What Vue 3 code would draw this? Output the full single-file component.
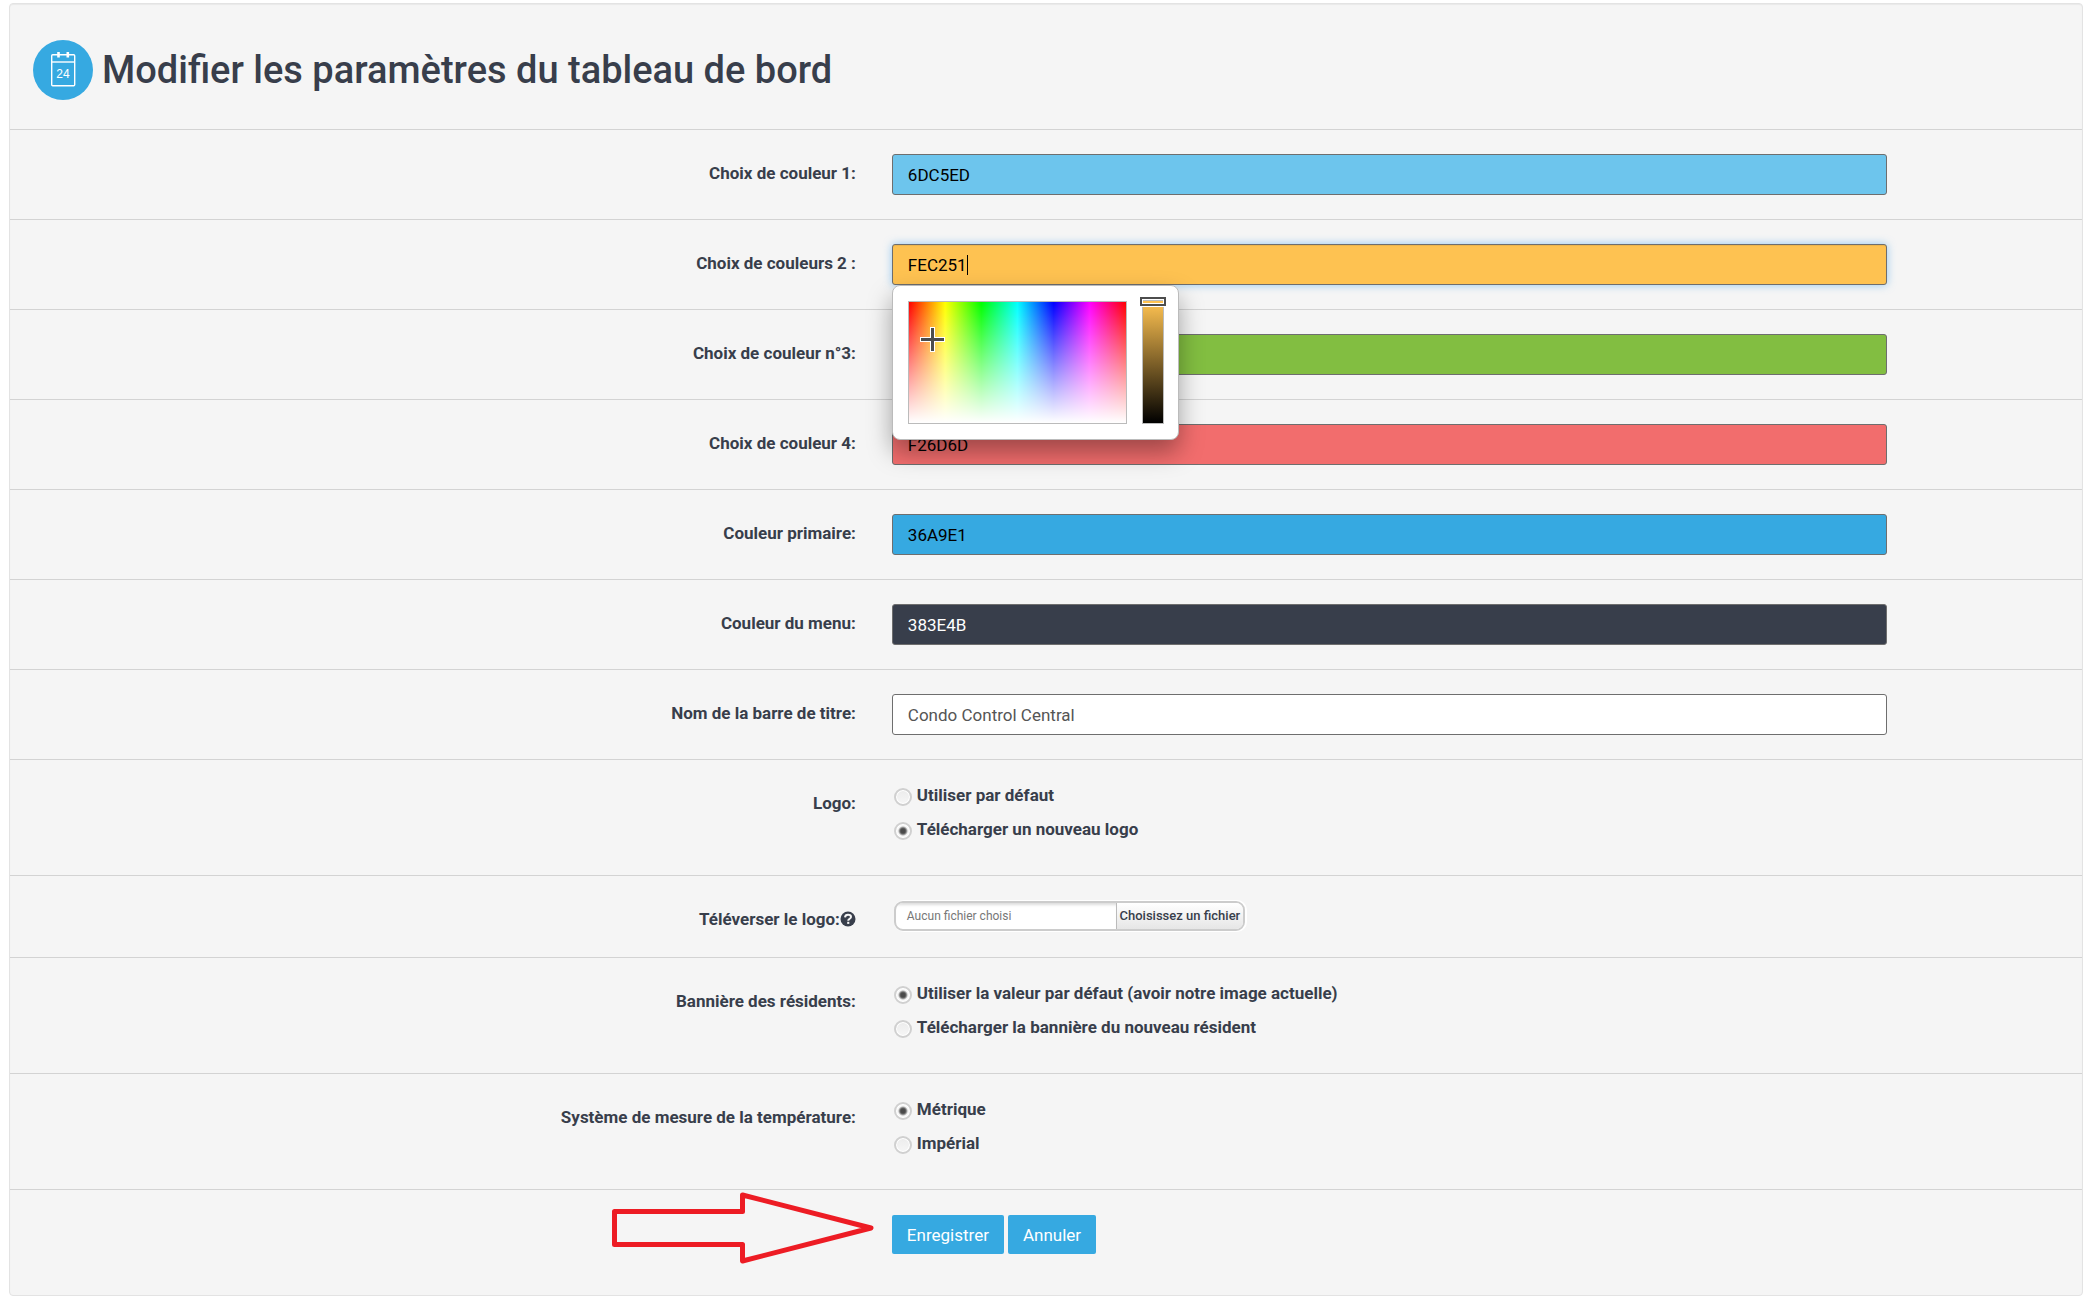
<template>
    <form class="panel" @submit.prevent>
        <header class="panel-header">
            <svg class="panel-icon" viewBox="0 0 60 60" aria-hidden="true">
                <circle cx="30" cy="30" r="30" fill="#36a9e1" />
                <g fill="none" stroke="#fff" stroke-width="1.4">
                    <rect x="18.7" y="14.7" width="23" height="31" rx="1" />
                    <path d="M18.7 22h23" />
                    <path d="M25.5 12v5.5M34.8 12v5.5" stroke-width="2.6" />
                </g>
                <text x="30" y="38" text-anchor="middle" class="panel-icon-day">24</text>
            </svg>
            <h1 class="panel-title">Modifier les paramètres du tableau de bord</h1>
        </header>

        <div v-for="field in fields" :key="field.id" class="row">
            <label :for="field.id" class="row-label">{{ field.label }}</label>
            <div class="field-wrapper">
                <input :id="field.id" v-model="field.value" type="text" autocomplete="off" spellcheck="false"
                    class="field" :class="field.id" />
                <template v-if="field.picker">
                    <span class="caret"></span>
                    <div class="picker">
                        <div class="picker-palette">
                            <svg class="picker-cross" viewBox="0 0 25 25" aria-hidden="true">
                                <path d="M12.5 0v25M0 12.5h25" stroke="#fff" stroke-width="5" />
                                <path d="M12.5 1v23M1 12.5h23" stroke="#4d4d4d" stroke-width="3" />
                            </svg>
                        </div>
                        <div class="picker-slider">
                            <span class="picker-thumb"></span>
                        </div>
                    </div>
                </template>
            </div>
        </div>

        <div class="row row-options" role="radiogroup" aria-labelledby="logo-label">
            <span id="logo-label" class="row-label">Logo:</span>
            <div class="options">
                <label v-for="option in logoOptions" :key="option" class="option">
                    <input v-model="logo" type="radio" name="logo" :value="option" class="radio" />{{ option }}
                </label>
            </div>
        </div>

        <div class="row row-file">
            <label for="logo-file" class="row-label">
                Téléverser le logo:<svg class="help-icon" viewBox="0 0 16 16" aria-hidden="true">
                    <circle cx="8" cy="8" r="7.5" fill="#383e4b" />
                    <path d="M5 6.300C5.200 4.600 6.400 3.800 8 3.800C9.800 3.800 11 4.700 11 6C11 7.800 8.200 7.700 8.200 9.800"
                        fill="none" stroke="#f5f5f5" stroke-width="2" />
                    <path d="M7.200 10.800h2.100v2.100h-2.100z" fill="#f5f5f5" />
                </svg>
            </label>
            <div class="uploader">
                <span class="uploader-name">Aucun fichier choisi</span>
                <span class="uploader-action">Choisissez un fichier</span>
                <input id="logo-file" type="file" class="uploader-input" />
            </div>
        </div>

        <div class="row row-options" role="radiogroup" aria-labelledby="banner-label">
            <span id="banner-label" class="row-label">Bannière des résidents:</span>
            <div class="options">
                <label v-for="option in bannerOptions" :key="option" class="option">
                    <input v-model="banner" type="radio" name="banner" :value="option" class="radio" />{{ option }}
                </label>
            </div>
        </div>

        <div class="row row-options" role="radiogroup" aria-labelledby="unit-label">
            <span id="unit-label" class="row-label">Système de mesure de la température:</span>
            <div class="options">
                <label v-for="option in unitOptions" :key="option" class="option">
                    <input v-model="unit" type="radio" name="unit" :value="option" class="radio" />{{ option }}
                </label>
            </div>
        </div>

        <div class="row row-actions">
            <div class="actions">
                <svg class="arrow" viewBox="0 0 264 74" aria-hidden="true">
                    <path d="M3.500 20.500H131.500V4L260 37 131.500 70V53.500H3.500z" fill="none" stroke="#ed1c24"
                        stroke-width="5" stroke-linejoin="round" />
                </svg>
                <button type="submit" class="btn">Enregistrer</button>
                <button type="button" class="btn">Annuler</button>
            </div>
        </div>
    </form>
</template>

<script setup>
import { onMounted, ref } from 'vue';

const fields = ref([
    { id: 'color-1', label: 'Choix de couleur 1:', value: '6DC5ED' },
    { id: 'color-2', label: 'Choix de couleurs 2 :', value: 'FEC251', picker: true },
    { id: 'color-3', label: 'Choix de couleur n°3:', value: '82BE41' },
    { id: 'color-4', label: 'Choix de couleur 4:', value: 'F26D6D' },
    { id: 'color-primary', label: 'Couleur primaire:', value: '36A9E1' },
    { id: 'color-menu', label: 'Couleur du menu:', value: '383E4B' },
    { id: 'title-bar', label: 'Nom de la barre de titre:', value: 'Condo Control Central' }
]);

const logoOptions = ['Utiliser par défaut', 'Télécharger un nouveau logo'];
const bannerOptions = [
    'Utiliser la valeur par défaut (avoir notre image actuelle)',
    'Télécharger la bannière du nouveau résident'
];
const unitOptions = ['Métrique', 'Impérial'];

const logo = ref(logoOptions[1]);
const banner = ref(bannerOptions[0]);
const unit = ref(unitOptions[0]);

onMounted(() => {
    const input = document.getElementById('color-2');
    input.focus();
    input.setSelectionRange(6, 6);
});
</script>

<style>
body {
    margin: 0;
    background: #fff;
}
</style>

<style scoped>
.panel {
    margin: 3px 2px 2px 9px;
    border: 1px solid #e3e3e3;
    border-radius: 4px;
    background: #f5f5f5;
    box-shadow: inset 0 1px 1px rgba(0, 0, 0, 0.05);
    font-family: Roboto, "Liberation Sans", sans-serif;
    font-size: 17px;
    line-height: 24px;
    color: #383e4b;
}

.panel-header {
    display: flex;
    align-items: center;
    gap: 9px;
    padding: 36px 23px 29px;
}

.panel-icon {
    width: 60px;
    height: 60px;
}

.panel-icon-day {
    fill: #fff;
    font-family: "Liberation Sans", sans-serif;
    font-size: 12px;
}

.panel-title {
    margin: 0;
    font-size: 38px;
    font-weight: 500;
    line-height: 60px;
}

.row {
    display: grid;
    grid-template-columns: 17fr 20fr;
    column-gap: 36px;
    align-items: start;
    padding: 24px 195px 24px 0;
    border-top: 1px solid #d3d3d3;
}

.row-label {
    padding-top: 7px;
    font-weight: 700;
    text-align: right;
}

.field-wrapper {
    position: relative;
}

.field {
    display: block;
    box-sizing: border-box;
    width: 100%;
    height: 41px;
    padding: 0 15px;
    border: 1px solid #6e6e6e;
    border-radius: 3px;
    outline: 0;
    background: #fff;
    color: #000;
    font-family: inherit;
    font-size: 17px;
}

.field:focus {
    box-shadow: inset 0 1px 1px rgba(0, 0, 0, 0.075), 0 0 8px rgba(82, 168, 236, 0.6);
    caret-color: transparent;
}

.caret {
    position: absolute;
    top: 11px;
    left: 75px;
    width: 1px;
    height: 20px;
    background: #000;
}

.color-1 {
    background: #6dc5ed;
}

.color-2 {
    background: #fec251;
}

.color-3 {
    background: #82be41;
}

.color-4 {
    background: #f26d6d;
}

.color-primary {
    background: #36a9e1;
}

.color-menu {
    background: #383e4b;
    color: #fff;
}

.title-bar {
    color: #555;
}

.picker {
    position: absolute;
    top: 100%;
    left: 0;
    z-index: 2;
    display: flex;
    gap: 15px;
    padding: 15px 14px 15px 15px;
    border: 1px solid #bbb;
    border-radius: 8px;
    background: #fff;
    box-shadow: 0 12px 24px rgba(0, 0, 0, 0.35);
}

.picker-palette {
    position: relative;
    width: 217px;
    height: 121px;
    border: 1px solid #bbb;
    background:
        linear-gradient(to bottom, rgba(255, 255, 255, 0), #fff),
        linear-gradient(to right, #f00, #ff0, #0f0, #0ff, #00f, #f0f, #f00);
}

.picker-cross {
    position: absolute;
    top: 25px;
    left: 11px;
    width: 25px;
    height: 25px;
}

.picker-slider {
    position: relative;
    width: 20px;
    height: 121px;
    border: 1px solid #bbb;
    background: linear-gradient(to bottom, #fec251, #000);
}

.picker-thumb {
    position: absolute;
    top: -5px;
    left: -3px;
    width: 20px;
    height: 3px;
    padding: 1px;
    border: 2px solid #4d4d4d;
    outline: 1px solid #fff;
    background: linear-gradient(#bbb 50%, #fec251 50%) content-box;
    box-shadow: inset 0 0 0 1px #fff;
}

.options {
    display: flex;
    flex-direction: column;
    gap: 10px;
}

.option {
    display: flex;
    gap: 5px;
    padding-left: 2px;
    font-weight: 700;
}

.row-options {
    padding-top: 23px;
    padding-bottom: 34px;
}

.row-options .row-label {
    padding-top: 8px;
}

.radio {
    appearance: none;
    box-sizing: border-box;
    width: 18px;
    height: 18px;
    margin: 5px 0 0;
    border: 2px solid #d0d0d0;
    border-radius: 50%;
    background: linear-gradient(#ececec, #f6f6f6);
    box-shadow: inset 0 0 0 1px #fff;
}

.radio:checked {
    background: radial-gradient(circle, #4a4a4a 0 2px, #6a6a6a 3px, #f6f6f6 5px);
}

.row-file {
    padding-bottom: 26px;
}

.help-icon {
    width: 16px;
    height: 16px;
    vertical-align: -2px;
}

.uploader {
    position: relative;
    display: flex;
    justify-self: start;
    box-sizing: border-box;
    height: 30px;
    margin: 1px 0 0 2px;
    border: 2px solid #ccc;
    border-radius: 9px;
    background: #fff;
    box-shadow: 1px 0 0 1px #fff;
    font-size: 12px;
    line-height: 26px;
    overflow: hidden;
}

.uploader-name {
    width: 209px;
    padding-left: 11px;
    box-shadow: inset 0 4px 3px -2px #ddd;
    color: #777;
}

.uploader-action {
    width: 122px;
    padding: 0 2px;
    border-left: 1px solid #bbb;
    background: linear-gradient(#fff, #e6e6e6);
    font-size: 13px;
    font-weight: 500;
    text-align: center;
    white-space: nowrap;
}

.uploader-input {
    position: absolute;
    inset: 0;
    width: 100%;
    opacity: 0;
}

.row-actions {
    padding-top: 25px;
    padding-bottom: 41px;
}

.actions {
    position: relative;
    grid-column: 2;
    display: flex;
    gap: 4px;
}

.arrow {
    position: absolute;
    top: -24px;
    right: 100%;
    width: 264px;
    height: 74px;
    margin-right: 17px;
}

.btn {
    height: 39px;
    padding: 0 15px;
    border: 0;
    border-radius: 2px;
    background: #36a9e1;
    color: #fff;
    font-family: inherit;
    font-size: 17px;
}
</style>
